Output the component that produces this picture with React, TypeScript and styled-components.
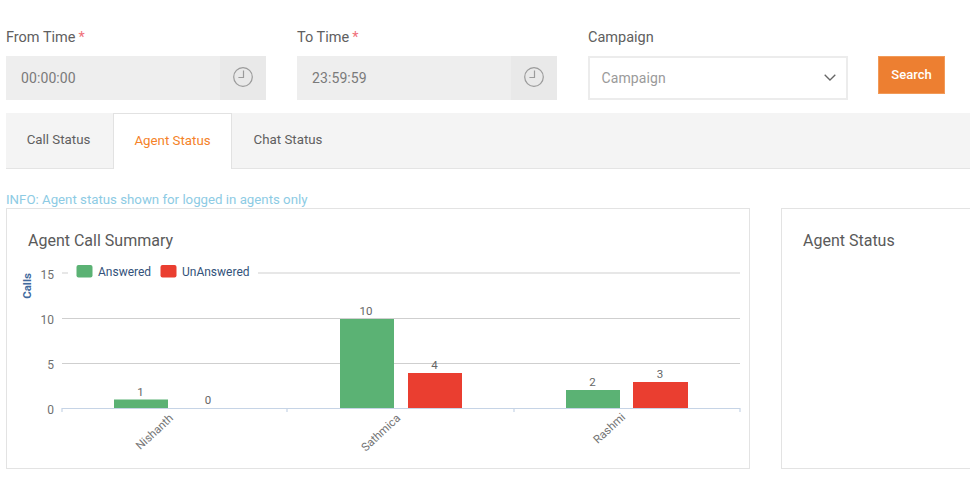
import React from "react";
import styled, { createGlobalStyle } from "styled-components";

const Global = createGlobalStyle`
  html, body { margin: 0; padding: 0; background: #fff; }
  body { font-family: Roboto, "Liberation Sans", sans-serif; color: #555; overflow: hidden; }
`;

const Page = styled.div`
  width: 970px;
  height: 500px;
  box-sizing: border-box;
  padding: 28px 0 0 6px;
  overflow: hidden;
`;

const FilterRow = styled.div`
  display: flex;
  align-items: flex-start;
  gap: 31px;
`;

const Field = styled.div`
  width: 260px;
  flex: none;
`;

const Label = styled.label`
  display: block;
  height: 28px;
  line-height: 19px;
  font-size: 14.5px;
  color: #606060;
`;

const Required = styled.span`
  color: #f0707a;
  margin-left: 3px;
`;

const TimeBox = styled.div`
  display: flex;
  height: 44px;
  background: #eeeeee;
`;

const TimeValue = styled.div`
  flex: 1;
  padding-left: 15px;
  line-height: 44px;
  font-size: 14px;
  letter-spacing: 0.1px;
  color: #7a7a7a;
`;

const TimeAddon = styled.div`
  width: 46px;
  display: flex;
  align-items: center;
  justify-content: center;
  padding-bottom: 3px;
  box-sizing: border-box;
  background: #e9e9e9;
`;

const SelectBox = styled.div`
  display: flex;
  align-items: center;
  justify-content: space-between;
  box-sizing: border-box;
  height: 44px;
  margin-left: -0.5px;
  padding: 0 10px 1px 12px;
  background: #fff;
  border: 2px solid #ececec;
  font-size: 14px;
  letter-spacing: 0.1px;
  color: #9a9a9a;
`;

const SearchButton = styled.button`
  flex: none;
  width: 67px;
  height: 38px;
  margin: 28px 0 0 -1px;
  padding: 0 0 1px;
  border: 1px solid #f29a58;
  background: #ed7f31;
  color: #fff;
  font: 500 13px Roboto, "Liberation Sans", sans-serif;
`;

const TabBar = styled.div`
  display: flex;
  height: 56px;
  margin-top: 13px;
  box-sizing: border-box;
  background: #f4f4f4;
  border-bottom: 1px solid #e4e4e4;
`;

const Tab = styled.div<{ $active?: boolean; $width: number; $inset?: number }>`
  width: ${(p) => p.$width}px;
  box-sizing: border-box;
  height: ${(p) => (p.$active ? "56px" : "55px")};
  padding-right: ${(p) => p.$inset ?? 0}px;
  line-height: ${(p) => (p.$active ? "54px" : "53px")};
  text-align: center;
  font-size: 13.3px;
  color: ${(p) => (p.$active ? "#f58229" : "#5f5f5f")};
  background: ${(p) => (p.$active ? "#fff" : "transparent")};
  border: ${(p) => (p.$active ? "1px solid #e2e2e2" : "none")};
  border-bottom: none;
`;

const Info = styled.div`
  margin-top: 22px;
  height: 17px;
  line-height: 17px;
  font-size: 13.25px;
  color: #8dcbe4;
`;

const Cards = styled.div`
  display: flex;
  gap: 31px;
  align-items: flex-start;
`;

const Card = styled.section<{ $width: number }>`
  flex: none;
  width: ${(p) => p.$width}px;
  height: 261px;
  box-sizing: border-box;
  border: 1px solid #e3e3e3;
`;

const CardTitle = styled.h3`
  margin: 22px 0 0 21px;
  height: 20px;
  line-height: 20px;
  font-size: 16px;
  font-weight: 400;
  color: #5a5a5a;
`;

const Chart = styled.svg`
  display: block;
  width: 742px;
  height: 216px;
  font-family: Roboto, "Liberation Sans", sans-serif;
`;

const Clock = () => (
  <svg width="20" height="20" viewBox="0 0 20 20" fill="none" stroke="#9b9b9b" strokeWidth="1.2">
    <circle cx="10" cy="10" r="9.3" />
    <path d="M10.5 3.6V10.5H5.4" />
  </svg>
);

const Chevron = () => (
  <svg width="12" height="7" viewBox="0 0 12 7" fill="none" stroke="#666" strokeWidth="1.3">
    <path d="M.7.7 6 6 11.3.7" />
  </svg>
);

const GREEN = "#5bb274";
const RED = "#ea3e30";

const bars = [
  { x: 114, y: 399.5, w: 54, fill: GREEN, label: "1", lx: 140.5, ly: 396 },
  { x: 340, y: 319, w: 54, fill: GREEN, label: "10", lx: 366, ly: 315 },
  { x: 408, y: 373, w: 54, fill: RED, label: "4", lx: 434.5, ly: 369 },
  { x: 566, y: 390, w: 54, fill: GREEN, label: "2", lx: 592.5, ly: 386 },
  { x: 633, y: 382, w: 55, fill: RED, label: "3", lx: 660, ly: 378 },
];

const names = [
  { t: "Nishanth", x: 174, y: 419 },
  { t: "Sathmica", x: 401, y: 419 },
  { t: "Rashmi", x: 626, y: 418 },
];

const AgentChart = () => (
  <Chart viewBox="7 251 742 216">
    <text x="31" y="286" transform="rotate(-90 31 286)" textAnchor="middle" fontSize="11.5" fontWeight="700" fill="#41699c">
      Calls
    </text>
    {[["15", 273], ["10", 318], ["5", 363], ["0", 408.5]].map(([t, y]) => (
      <text key={t} x="54" y={Number(y) + 5.5} textAnchor="end" fontSize="12" fill="#707070">
        {t}
      </text>
    ))}
    <path d="M62 273h6M258 273h482M62 318.5h678M62 363.5h678" stroke="#cfcfcf" strokeWidth="1" fill="none" />
    <path d="M62 408.5h678M62 408v4M287 408v4M514 408v4M740 408v4" stroke="#c6d4e6" strokeWidth="1.2" fill="none" />
    {bars.map((b) => (
      <g key={b.x}>
        <rect x={b.x} y={b.y} width={b.w} height={408 - b.y} fill={b.fill} />
        <text x={b.lx} y={b.ly} textAnchor="middle" fontSize="11.5" fill="#666">
          {b.label}
        </text>
      </g>
    ))}
    <text x="208" y="404" textAnchor="middle" fontSize="11.5" fill="#666">0</text>
    {names.map((n) => (
      <text key={n.t} x={n.x} y={n.y} textAnchor="end" fontSize="11.5" fill="#757575" transform={`rotate(-43 ${n.x} ${n.y})`}>
        {n.t}
      </text>
    ))}
    <rect x="76.5" y="265" width="16" height="12.5" rx="2" fill={GREEN} />
    <text x="98" y="276" fontSize="12" fill="#33527a">Answered</text>
    <rect x="160.5" y="265" width="16" height="12.5" rx="2" fill={RED} />
    <text x="182" y="276" fontSize="12" fill="#33527a">UnAnswered</text>
  </Chart>
);

export default function App() {
  return (
    <Page>
      <Global />
      <FilterRow>
        <Field>
          <Label>From Time<Required>*</Required></Label>
          <TimeBox>
            <TimeValue>00:00:00</TimeValue>
            <TimeAddon><Clock /></TimeAddon>
          </TimeBox>
        </Field>
        <Field>
          <Label>To Time<Required>*</Required></Label>
          <TimeBox>
            <TimeValue>23:59:59</TimeValue>
            <TimeAddon><Clock /></TimeAddon>
          </TimeBox>
        </Field>
        <Field>
          <Label>Campaign</Label>
          <SelectBox>
            Campaign
            <Chevron />
          </SelectBox>
        </Field>
        <SearchButton>Search</SearchButton>
      </FilterRow>
      <TabBar>
        <Tab $width={107} $inset={2}>Call Status</Tab>
        <Tab $width={119} $active>Agent Status</Tab>
        <Tab $width={112}>Chat Status</Tab>
      </TabBar>
      <Info>INFO: Agent status shown for logged in agents only</Info>
      <Cards>
        <Card $width={744}>
          <CardTitle>Agent Call Summary</CardTitle>
          <AgentChart />
        </Card>
        <Card $width={300}>
          <CardTitle>Agent Status</CardTitle>
        </Card>
      </Cards>
    </Page>
  );
}
